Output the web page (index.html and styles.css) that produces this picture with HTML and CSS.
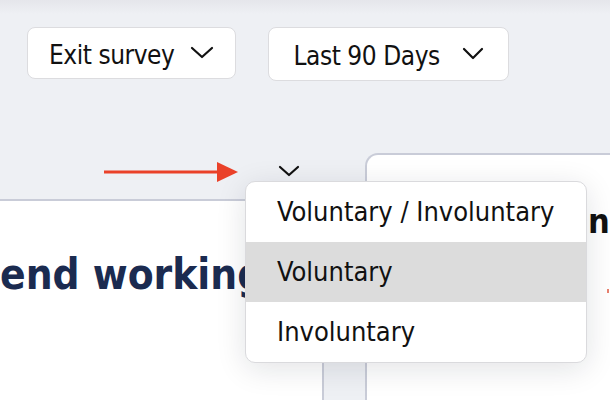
FILE: index.html
```html
<!DOCTYPE html>
<html lang="en">
<head>
  <meta charset="UTF-8">
  <title>Attrition dashboard</title>
  <link rel="stylesheet" href="styles.css">
</head>
<body>

  <div class="toolbar">
    <button class="filter">
      <span>Exit survey</span>
      <svg class="chev" width="24" height="13" viewBox="0 0 24 13"><polyline points="2,2 12,11 22,2"/></svg>
    </button>
    <button class="filter filter-wide">
      <span>Last 90 Days</span>
      <svg class="chev" width="22" height="13" viewBox="0 0 22 13"><polyline points="2,2 11,11 20,2"/></svg>
    </button>
  </div>

  <div class="board">
    <div class="card card-left">
      <h2 class="card-title">end working</h2>
    </div>
    <div class="card card-right">
      <h2 class="card-title-dark">n</h2>
      <div class="marker"></div>
    </div>

    <!-- annotation arrow -->
    <svg class="arrow" width="140" height="22" viewBox="0 0 140 22">
      <line x1="2" y1="11" x2="118" y2="11"/>
      <polygon points="115,1 136,11 115,21"/>
    </svg>

    <svg class="menu-toggle" width="22" height="12" viewBox="0 0 22 12"><polyline points="2,2 11,10 20,2"/></svg>

    <ul class="menu">
      <li>Voluntary / Involuntary</li>
      <li class="active">Voluntary</li>
      <li>Involuntary</li>
    </ul>
  </div>

</body>
</html>
```
FILE: styles.css
```css
body {
  margin: 0;
  height: 400px;
  overflow: hidden;
  font-family: "DejaVu Sans Condensed", "DejaVu Sans", sans-serif;
  background: linear-gradient(#e5e6eb, #eef0f4 14px);
  color: #111;
}

.toolbar {
  display: flex;
  align-items: flex-start;
  gap: 32px;
  padding: 27px 0 0 27px;
}

.filter {
  display: flex;
  align-items: center;
  gap: 16px;
  height: 52px;
  box-sizing: border-box;
  padding: 4px 21px 0 21px;
  background: white;
  border: 1.5px solid #dcdcdf;
  border-radius: 8px;
  font-family: inherit;
  font-size: 26px;
  letter-spacing: -0.45px;
  color: #111;
}

.filter-wide {
  height: 54px;
  gap: 22px;
  padding: 4px 24px 0 24px;
}

.chev polyline,
.menu-toggle polyline {
  fill: none;
  stroke: #111;
  stroke-width: 2.2;
  stroke-linecap: round;
  stroke-linejoin: round;
}

.chev {
  margin-top: -5px;
}

/* cards */
.board {
  position: relative;
  display: flex;
  align-items: flex-start;
  gap: 41px;
}

.card {
  background: white;
  box-sizing: border-box;
  overflow: hidden;
}

.card-left {
  margin-top: 118px;
  width: 324px;
  height: 201px;
  border-top: 2px solid #c9ccd8;
  border-right: 2px solid #c9ccd8;
}

.card-right {
  margin-top: 72px;
  flex: 1;
  height: 247px;
  border-top: 2px solid #c9ccd8;
  border-left: 2px solid #c9ccd8;
  border-top-left-radius: 13px;
}

.card-title {
  margin: 49px 0 0 0;
  font-size: 42px;
  line-height: 50px;
  font-weight: bold;
  color: #1b2b50;
  white-space: nowrap;
}

.card-title-dark {
  margin: 46px 0 0 221px;
  font-size: 34px;
  line-height: 40px;
  font-weight: bold;
  color: #111;
  white-space: nowrap;
}

.marker {
  width: 2px;
  height: 4px;
  margin: 48px 0 0 240px;
  background: #e8826f;
}

/* annotation + dropdown menu */
.arrow {
  position: absolute;
  left: 102px;
  top: 80px;
}

.arrow line {
  stroke: #ea4129;
  stroke-width: 3;
}

.arrow polygon {
  fill: #ea4129;
}

.menu-toggle {
  position: absolute;
  left: 278px;
  top: 84px;
}

.menu {
  position: absolute;
  left: 245px;
  top: 100px;
  width: 342px;
  margin: 0;
  padding: 0;
  list-style: none;
  box-sizing: border-box;
  background: white;
  border: 1.5px solid #dadadd;
  border-radius: 10px;
  overflow: hidden;
  box-shadow: 0 6px 30px rgba(20, 25, 40, 0.12);
}

.menu li {
  height: 60px;
  line-height: 60px;
  padding-left: 31px;
  font-size: 27px;
  color: #111;
  white-space: nowrap;
}

.menu li.active {
  background: #dcdcdc;
}
```
